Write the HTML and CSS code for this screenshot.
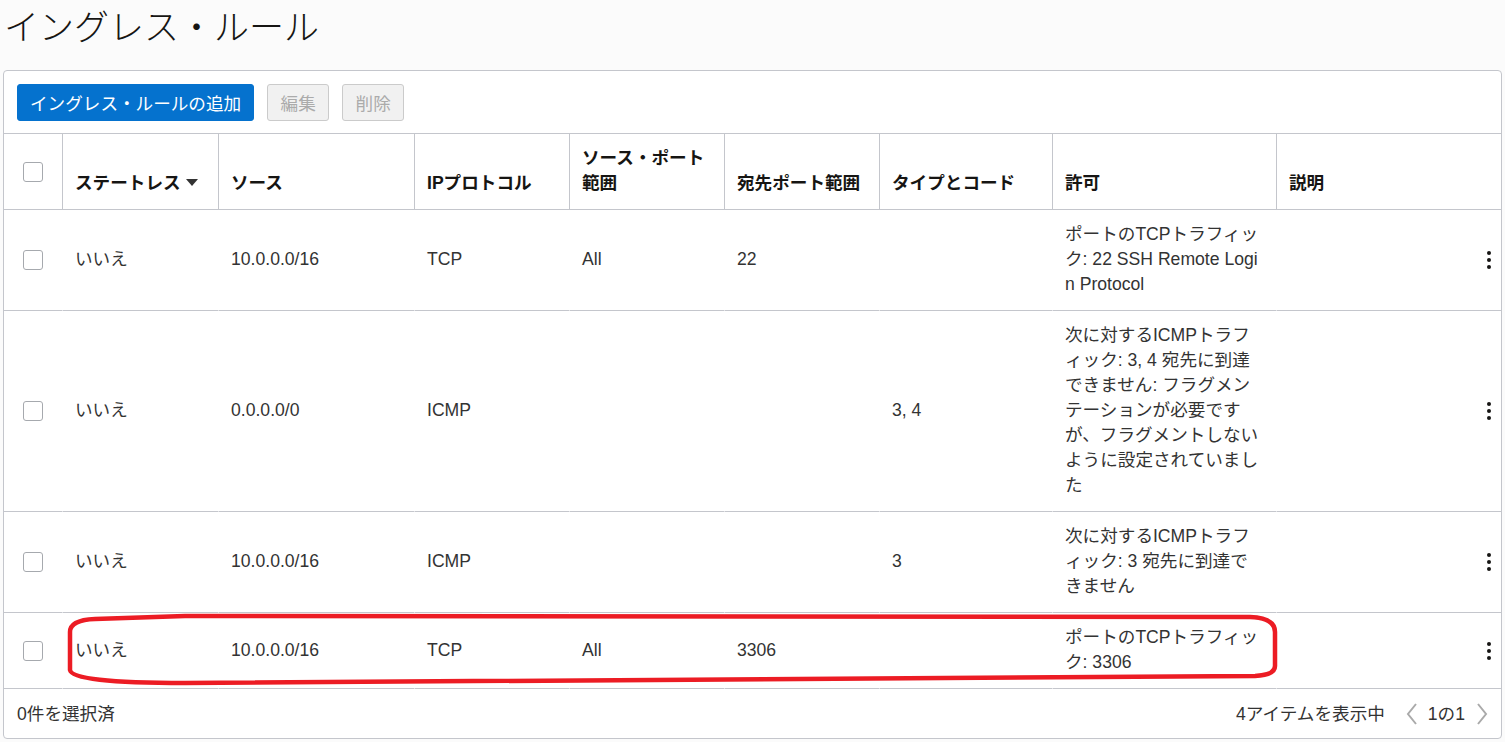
FILE: index.html
```html
<!DOCTYPE html>
<html lang="ja">
<head>
<meta charset="utf-8">
<title>イングレス・ルール</title>
<link rel="stylesheet" href="styles.css">
</head>
<body>
<h1 class="title">イングレス・ルール</h1>
<div class="card">
  <div class="toolbar">
    <button class="btn btn-primary">イングレス・ルールの追加</button>
    <button class="btn btn-disabled">編集</button>
    <button class="btn btn-disabled">削除</button>
  </div>
  <table class="grid">
    <colgroup>
      <col class="c-check"><col class="c-state"><col class="c-src"><col class="c-proto"><col class="c-sport"><col class="c-dport"><col class="c-type"><col class="c-allow"><col class="c-desc">
    </colgroup>
    <thead>
      <tr>
        <th class="check-cell"><span class="checkbox"></span></th>
        <th>ステートレス <span class="sort-caret"></span></th>
        <th>ソース</th>
        <th>IPプロトコル</th>
        <th>ソース・ポート<br>範囲</th>
        <th>宛先ポート範囲</th>
        <th>タイプとコード</th>
        <th>許可</th>
        <th>説明</th>
      </tr>
    </thead>
    <tbody>
      <tr>
        <td class="check-cell"><span class="checkbox"></span></td>
        <td>いいえ</td>
        <td>10.0.0.0/16</td>
        <td>TCP</td>
        <td>All</td>
        <td>22</td>
        <td></td>
        <td class="allow">ポートのTCPトラフィック: 22 SSH Remote Login Protocol</td>
        <td class="desc"><span class="kebab"><i></i><i></i><i></i></span></td>
      </tr>
      <tr>
        <td class="check-cell"><span class="checkbox"></span></td>
        <td>いいえ</td>
        <td>0.0.0.0/0</td>
        <td>ICMP</td>
        <td></td>
        <td></td>
        <td>3, 4</td>
        <td class="allow">次に対するICMPトラフィック: 3, 4 宛先に到達できません: フラグメンテーションが必要ですが、フラグメントしないように設定されていました</td>
        <td class="desc"><span class="kebab"><i></i><i></i><i></i></span></td>
      </tr>
      <tr>
        <td class="check-cell"><span class="checkbox"></span></td>
        <td>いいえ</td>
        <td>10.0.0.0/16</td>
        <td>ICMP</td>
        <td></td>
        <td></td>
        <td>3</td>
        <td class="allow">次に対するICMPトラフィック: 3 宛先に到達できません</td>
        <td class="desc"><span class="kebab"><i></i><i></i><i></i></span></td>
      </tr>
      <tr>
        <td class="check-cell"><span class="checkbox"></span></td>
        <td>いいえ</td>
        <td>10.0.0.0/16</td>
        <td>TCP</td>
        <td>All</td>
        <td>3306</td>
        <td></td>
        <td class="allow">ポートのTCPトラフィック: 3306</td>
        <td class="desc"><span class="kebab"><i></i><i></i><i></i></span></td>
      </tr>
    </tbody>
  </table>
  <div class="footer">
    <span class="selected">0件を選択済</span>
    <div class="pager">
      <span class="count">4アイテムを表示中</span>
      <svg class="chev" width="14" height="24" viewBox="0 0 14 24"><polyline points="11,2 3,12 11,22" fill="none" stroke="#aaaaaa" stroke-width="2"/></svg>
      <span class="page">1の1</span>
      <svg class="chev" width="14" height="24" viewBox="0 0 14 24"><polyline points="3,2 11,12 3,22" fill="none" stroke="#aaaaaa" stroke-width="2"/></svg>
    </div>
  </div>
</div>
<svg class="annotation" width="1505" height="742" viewBox="0 0 1505 742">
  <path d="M70,632 Q70,620 95,619 L185,616 L1250,617 Q1275,618 1275,632 L1275,666 Q1275,675 1255,676 L185,683 Q72,683 70,670 Z" fill="none" stroke="#ec1c24" stroke-width="4.5" stroke-linejoin="round"/>
</svg>
</body>
</html>
```

FILE: styles.css
```css
html, body {
  margin: 0;
  padding: 0;
}
body {
  background: #fbfbfb;
  font-family: "Liberation Sans", "Noto Sans CJK JP", sans-serif;
  font-size: 17.6px;
  line-height: 25px;
  color: #333333;
  position: relative;
  height: 742px;
  overflow: hidden;
}
.title {
  margin: 0;
  padding: 2px 0 0 4px;
  height: 68px;
  box-sizing: border-box;
  font-size: 35px;
  line-height: 46px;
  font-weight: 300;
  color: #161513;
  font-family: "Noto Sans CJK JP", "Liberation Sans", sans-serif;
}
.card {
  margin: 2px 3px 0 3px;
  background: #ffffff;
  border: 1px solid #c4c6cc;
  border-radius: 4px;
  height: 669px;
  box-sizing: border-box;
}
.toolbar {
  display: flex;
  gap: 13px;
  padding: 13px 13px 12px 13px;
  border-bottom: 1px solid #c4c6cc;
}
.btn {
  height: 37px;
  font-family: inherit;
  font-size: 17.6px;
  border-radius: 3px;
  padding: 0 12px;
  border: 1px solid transparent;
}
.btn-primary {
  background: #0572ce;
  color: #ffffff;
  border-color: #0572ce;
}
.btn-disabled {
  background: #f1f1f1;
  color: #ababab;
  border-color: #cbcbcb;
  width: 62px;
}
.grid {
  width: 100%;
  table-layout: fixed;
  border-collapse: separate;
  border-spacing: 0;
}
.c-check { width: 58px; }
.c-state { width: 156px; }
.c-src { width: 196px; }
.c-proto { width: 155px; }
.c-sport { width: 155px; }
.c-dport { width: 155px; }
.c-type { width: 173px; }
.c-allow { width: 224px; }
.c-desc { width: 225px; }
.grid th, .grid td {
  padding: 12px 12px 13px 12px;
  border-left: 1px solid transparent;
  border-bottom: 1px solid #c4c6cc;
  text-align: left;
}
.grid th {
  vertical-align: bottom;
  font-weight: bold;
  color: #161513;
  border-left-color: #c4c6cc;
}
.grid th:first-child, .grid td:first-child {
  border-left: none;
}
.grid td {
  vertical-align: middle;
}
.grid .check-cell {
  text-align: center;
  padding-left: 0;
  padding-right: 0;
  vertical-align: middle;
}
.checkbox {
  display: inline-block;
  width: 20px;
  height: 20px;
  box-sizing: border-box;
  border: 1px solid #a6a9ae;
  border-radius: 3px;
  background: #ffffff;
  vertical-align: middle;
}
.sort-caret {
  display: inline-block;
  width: 0;
  height: 0;
  border-left: 6px solid transparent;
  border-right: 6px solid transparent;
  border-top: 7px solid #333333;
  vertical-align: middle;
  margin-left: 1px;
  position: relative;
  top: -2px;
}
.allow {
  word-break: break-all;
  padding-left: 13px;
}
.grid td.desc {
  text-align: right;
  padding-right: 10px;
}
.kebab {
  display: inline-flex;
  flex-direction: column;
  gap: 3px;
  vertical-align: middle;
}
.kebab i {
  display: block;
  width: 4px;
  height: 4px;
  border-radius: 50%;
  background: #161513;
}
.footer {
  display: flex;
  justify-content: space-between;
  align-items: center;
  height: 50px;
  padding: 0 12px 0 13px;
}
.pager {
  display: flex;
  align-items: center;
}
.count {
  margin-right: 20px;
}
.page {
  margin: 0 10px 0 9px;
}
.chev {
  display: block;
}
.annotation {
  position: absolute;
  left: 0;
  top: 0;
  pointer-events: none;
}
```
